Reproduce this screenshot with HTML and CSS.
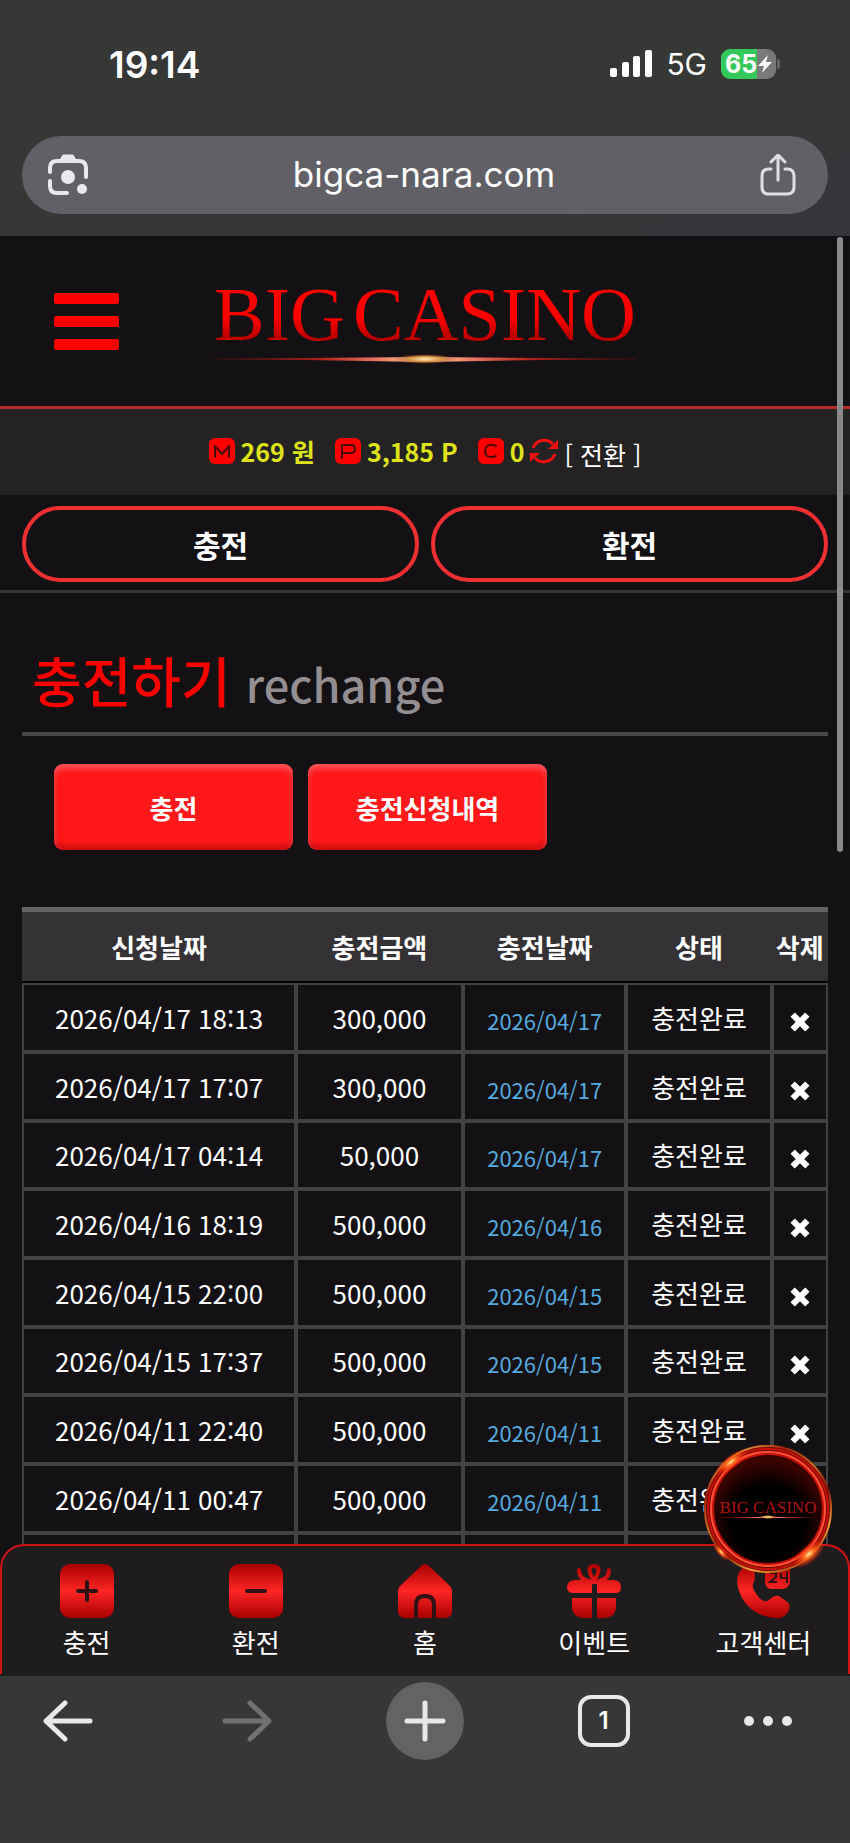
FILE: index.html
```html
<!DOCTYPE html>
<html lang="ko">
	<head>
		<meta charset="utf-8">
		<meta name="viewport" content="width=device-width, initial-scale=1">
		<title>BIG CASINO</title>
		<link rel="stylesheet" href="styles.css">
	</head>
	<body>
		<header class="browser-top">
			<div class="status">
				<span class="clock">19:14</span>
				<div class="status-right">
					<svg class="signal" viewBox="0 0 42 28" fill="#fff">
						<rect x="0" y="18" width="7" height="9" rx="2"/>
						<rect x="12" y="12" width="7" height="15" rx="2"/>
						<rect x="23" y="6" width="7" height="21" rx="2"/>
						<rect x="35" y="0" width="7" height="27" rx="2"/>
					</svg>
					<span class="network">5G</span>
					<div class="battery">
						<span class="battery-level">65</span>
						<svg class="bolt" viewBox="0 0 14 20"><path d="M10 1 0 12h6l-2 7L14 8H8z" fill="#fff"/></svg>
					</div>
				</div>
			</div>
			<div class="address">
				<button class="address-btn" aria-label="렌즈">
					<svg width="40" height="42" viewBox="0 0 40 42" fill="none" stroke="#e8e8ee" stroke-width="4" stroke-linecap="round">
						<path d="M2 18v-4q0-7 7-7h22q7 0 7 7v9M2 27v5q0 7 7 7h10"/>
						<path d="M12 6 15 1h10l3 5z" fill="#e8e8ee" stroke-width="1" stroke-linejoin="round"/>
						<circle cx="20" cy="23" r="7" fill="#e8e8ee" stroke="none"/>
						<circle cx="34" cy="35" r="5" fill="#e8e8ee" stroke="none"/>
					</svg>
				</button>
				<span class="url">bigca-nara.com</span>
				<button class="address-btn" aria-label="공유">
					<svg width="36" height="42" viewBox="0 0 36 42" fill="none" stroke="#e0e0e4" stroke-width="4" stroke-linecap="round" stroke-linejoin="round">
						<path d="M11 15H9q-7 0-7 7v11q0 7 7 7h18q7 0 7-7V22q0-7-7-7h-2" stroke-width="3"/>
						<path d="M18 26V2M11 8l7-7 7 7" stroke-width="3"/>
					</svg>
				</button>
			</div>
		</header>

		<div class="page">
			<div class="site-head">
				<button class="menu" aria-label="메뉴"><span></span><span></span><span></span></button>
				<a class="logo" href="#">
					<span class="logo-text"><span class="logo-word">BIG</span> <span class="logo-word">CASINO</span></span>
					<svg class="logo-flare" viewBox="0 0 420 12" preserveAspectRatio="none">
						<defs>
							<linearGradient id="beam">
								<stop offset="0" stop-color="#5a1010" stop-opacity="0.3"/>
								<stop offset="0.25" stop-color="#b02018"/>
								<stop offset="0.4" stop-color="#f08068"/>
								<stop offset="0.5" stop-color="#ffe9a8"/>
								<stop offset="0.6" stop-color="#f08068"/>
								<stop offset="0.75" stop-color="#b02018"/>
								<stop offset="1" stop-color="#5a1010" stop-opacity="0.3"/>
							</linearGradient>
							<radialGradient id="glow">
								<stop offset="0" stop-color="#fff0b8"/>
								<stop offset="0.5" stop-color="#d89848"/>
								<stop offset="1" stop-color="#a03018" stop-opacity="0"/>
							</radialGradient>
						</defs>
						<path d="M0 5h90l120-1 120 1h90v2h-90l-120 2-120-2H0z" fill="url(#beam)"/>
						<ellipse cx="210" cy="6" rx="32" ry="5" fill="url(#glow)"/>
					</svg>
				</a>
			</div>

			<div class="wallet">
				<svg class="coin" viewBox="0 0 26 26"><rect width="26" height="26" rx="6" fill="#f00"/><path d="M6 19V8l7 8 7-8v11" fill="none" stroke="#4a0a0a" stroke-width="2" stroke-linecap="round" stroke-linejoin="round"/></svg>
				<strong class="amount">269 원</strong>
				<svg class="coin coin-next" viewBox="0 0 26 26"><rect width="26" height="26" rx="6" fill="#f00"/><path d="M7 20V7h9q4 0 4 4t-4 4H8" fill="none" stroke="#4a0a0a" stroke-width="2" stroke-linecap="round" stroke-linejoin="round"/></svg>
				<strong class="amount">3,185 P</strong>
				<svg class="coin coin-next" viewBox="0 0 26 26"><rect width="26" height="26" rx="6" fill="#f00"/><path d="M18 8q-2-1-5-1-6 0-6 6t6 6q3 0 5-1" fill="none" stroke="#4a0a0a" stroke-width="2" stroke-linecap="round"/></svg>
				<strong class="amount">0</strong>
				<svg class="refresh" viewBox="0 0 28 28">
					<path d="M3 11A12 12 0 0 1 23 7M25 17A12 12 0 0 1 5 21" fill="none" stroke="#f01010" stroke-width="3"/>
					<path d="M28 3v9h-10zM0 25v-9h10z" fill="#f01010"/>
				</svg>
				<a class="convert" href="#">[ 전환 ]</a>
			</div>

			<div class="quick">
				<button class="quick-btn">충전</button>
				<button class="quick-btn">환전</button>
			</div>

			<main class="content">
				<h1 class="title">충전하기 <small class="subtitle">rechange</small></h1>
				<div class="tabs">
					<button class="tab">충전</button>
					<button class="tab">충전신청내역</button>
				</div>
				<table class="history">
					<colgroup>
						<col class="col-request"><col class="col-amount"><col class="col-date"><col class="col-state"><col class="col-delete">
					</colgroup>
					<thead>
						<tr><th>신청날짜</th><th>충전금액</th><th>충전날짜</th><th>상태</th><th>삭제</th></tr>
					</thead>
					<tbody>
						<tr><td>2026/04/17 18:13</td><td>300,000</td><td class="date">2026/04/17</td><td>충전완료</td><td><button class="delete" aria-label="삭제"><svg viewBox="0 0 18 18"><path d="m3 3 12 12M15 3 3 15"/></svg></button></td></tr>
						<tr><td>2026/04/17 17:07</td><td>300,000</td><td class="date">2026/04/17</td><td>충전완료</td><td><button class="delete" aria-label="삭제"><svg viewBox="0 0 18 18"><path d="m3 3 12 12M15 3 3 15"/></svg></button></td></tr>
						<tr><td>2026/04/17 04:14</td><td>50,000</td><td class="date">2026/04/17</td><td>충전완료</td><td><button class="delete" aria-label="삭제"><svg viewBox="0 0 18 18"><path d="m3 3 12 12M15 3 3 15"/></svg></button></td></tr>
						<tr><td>2026/04/16 18:19</td><td>500,000</td><td class="date">2026/04/16</td><td>충전완료</td><td><button class="delete" aria-label="삭제"><svg viewBox="0 0 18 18"><path d="m3 3 12 12M15 3 3 15"/></svg></button></td></tr>
						<tr><td>2026/04/15 22:00</td><td>500,000</td><td class="date">2026/04/15</td><td>충전완료</td><td><button class="delete" aria-label="삭제"><svg viewBox="0 0 18 18"><path d="m3 3 12 12M15 3 3 15"/></svg></button></td></tr>
						<tr><td>2026/04/15 17:37</td><td>500,000</td><td class="date">2026/04/15</td><td>충전완료</td><td><button class="delete" aria-label="삭제"><svg viewBox="0 0 18 18"><path d="m3 3 12 12M15 3 3 15"/></svg></button></td></tr>
						<tr><td>2026/04/11 22:40</td><td>500,000</td><td class="date">2026/04/11</td><td>충전완료</td><td><button class="delete" aria-label="삭제"><svg viewBox="0 0 18 18"><path d="m3 3 12 12M15 3 3 15"/></svg></button></td></tr>
						<tr><td>2026/04/11 00:47</td><td>500,000</td><td class="date">2026/04/11</td><td>충전완료</td><td></td></tr>
						<tr><td></td><td></td><td></td><td></td><td></td></tr>
					</tbody>
				</table>
			</main>

			<nav class="bottom-nav">
				<a class="nav-item" href="#">
					<svg class="nav-icon" viewBox="0 0 54 54">
						<defs>
							<linearGradient id="red" gradientUnits="userSpaceOnUse" x1="0" y1="0" x2="0" y2="54">
								<stop offset="0" stop-color="#a80000"/>
								<stop offset="0.5" stop-color="#ff2626"/>
								<stop offset="1" stop-color="#a80000"/>
							</linearGradient>
						</defs>
						<rect width="54" height="54" rx="10" fill="url(#red)"/>
						<path d="M18 27h18M27 18v18" stroke="#301212" stroke-width="4" stroke-linecap="round"/>
					</svg>
					<span>충전</span>
				</a>
				<a class="nav-item" href="#">
					<svg class="nav-icon" viewBox="0 0 54 54">
						<rect width="54" height="54" rx="10" fill="url(#red)"/>
						<path d="M18 27h18" stroke="#301212" stroke-width="4" stroke-linecap="round"/>
					</svg>
					<span>환전</span>
				</a>
				<a class="nav-item" href="#">
					<svg class="nav-icon" viewBox="0 0 54 54">
						<path d="M23 2q4-4 8 0l21 20q2 2 2 5v20q0 7-7 7H7q-7 0-7-7V27q0-3 2-5z" fill="url(#red)"/>
						<path d="M18 54V41q0-9 9-9t9 9v13" fill="none" stroke="#301212" stroke-width="4"/>
					</svg>
					<span>홈</span>
				</a>
				<a class="nav-item" href="#">
					<svg class="nav-icon" viewBox="0 0 54 54" fill="url(#red)">
						<path d="M8 16h38q8 0 8 7t-7 6H30v-9h-5v9H7q-7 0-7-6t8-7zM5 34h20v20H16Q5 53 5 42zM30 34h19v8q0 11-11 12h-8z"/>
						<path d="M27 17q-9-15 0-15t0 15zM22 17q-10-2-10-11M32 17q10-2 10-11" fill="none" stroke="url(#red)" stroke-width="4" stroke-linecap="round"/>
					</svg>
					<span>이벤트</span>
				</a>
				<a class="nav-item" href="#">
					<svg class="nav-icon" viewBox="0 0 54 54">
						<path d="M9 2q5-3 9 2l1 8q0 4-2 8-1 3 2 8 4 7 9 9 3 1 6-2 4-4 9-3l7 5q5 3 3 9-4 9-14 8Q16 52 6 34-5 12 9 2z" fill="url(#red)"/>
						<path d="M29 0h25v16q0 9-9 9h-9q-7 0-7-8z" fill="url(#red)"/>
						<path d="M34 9h6v4l-6 5h7M45 9v5h6M51 8v11" fill="none" stroke="#301212" stroke-width="2"/>
					</svg>
					<span>고객센터</span>
				</a>
			</nav>

			<a class="badge" href="#" aria-label="BIG CASINO">
				<svg viewBox="0 0 130 130">
					<defs>
						<linearGradient id="ring" x1="0.2" y1="0" x2="0.8" y2="1">
							<stop offset="0" stop-color="#ffc050"/>
							<stop offset="0.2" stop-color="#a02008"/>
							<stop offset="0.4" stop-color="#c87020"/>
							<stop offset="0.6" stop-color="#801008"/>
							<stop offset="0.8" stop-color="#f0a030"/>
							<stop offset="1" stop-color="#a03010"/>
						</linearGradient>
						<radialGradient id="disc" cy="0.6">
							<stop offset="0.6" stop-color="#000"/>
							<stop offset="1" stop-color="#3c0400"/>
						</radialGradient>
						<radialGradient id="spark">
							<stop offset="0" stop-color="#fff0a0"/>
							<stop offset="0.3" stop-color="#ff7020"/>
							<stop offset="1" stop-color="#f01000" stop-opacity="0"/>
						</radialGradient>
					</defs>
					<circle cx="65" cy="65" r="61" fill="url(#disc)" stroke="#700a00" stroke-width="6"/>
					<circle cx="65" cy="65" r="63" fill="none" stroke="url(#ring)" stroke-width="2"/>
					<circle cx="65" cy="65" r="60" fill="none" stroke="#c81008" stroke-width="2"/>
					<circle cx="65" cy="65" r="56" fill="none" stroke="#c01008" stroke-width="4"/>
					<circle cx="65" cy="65" r="57" fill="none" stroke="#ff5038" stroke-width="2"/>
					<ellipse cx="28" cy="18" rx="20" ry="7" transform="rotate(-38 28 18)" fill="url(#spark)"/>
					<ellipse cx="106" cy="110" rx="20" ry="9" transform="rotate(-40 106 110)" fill="url(#spark)"/>
					<ellipse cx="18" cy="108" rx="12" ry="4" transform="rotate(48 18 108)" fill="url(#spark)"/>
					<text class="badge-text" x="65" y="69" text-anchor="middle">BIG CASINO</text>
					<path d="M17 73h96v1H17z" fill="url(#beam)"/>
					<ellipse cx="65" cy="73" rx="9" ry="2" fill="url(#glow)"/>
				</svg>
			</a>
			<div class="scrollbar"></div>
		</div>

		<footer class="browser-bottom">
			<button class="tool" aria-label="뒤로">
				<svg width="50" height="42" viewBox="0 0 50 42"><path d="M22 3 3 21l19 18M3 21h44"/></svg>
			</button>
			<button class="tool tool-off" aria-label="앞으로">
				<svg width="50" height="42" viewBox="0 0 50 42"><path d="m28 3 19 18-19 18M47 21H3"/></svg>
			</button>
			<button class="tool tool-new" aria-label="새 탭">
				<svg width="42" height="42" viewBox="0 0 42 42"><path d="M21 3v36M3 21h36"/></svg>
			</button>
			<button class="tool"><span class="tab-count">1</span></button>
			<button class="tool tool-more" aria-label="더보기">
				<svg width="50" height="12" viewBox="0 0 50 12"><g fill="#e8e8ea" stroke="none"><circle cx="6" cy="6" r="5"/><circle cx="25" cy="6" r="5"/><circle cx="44" cy="6" r="5"/></g></svg>
			</button>
		</footer>
	</body>
</html>
```
FILE: styles.css
```css
* {
	box-sizing: border-box;
}

body {
	margin: 0;
	height: 100vh;
	display: flex;
	flex-direction: column;
	background: #131114;
	color: #fff;
	font-family: "Noto Sans CJK KR", sans-serif;
	font-size: 26px;
}

button {
	margin: 0;
	padding: 0;
	border: 0;
	background: none;
	color: inherit;
	font: inherit;
	cursor: pointer;
}

a {
	color: inherit;
	text-decoration: none;
}

svg {
	display: block;
}

/* browser top */
.browser-top {
	padding: 0 22px 22px;
	background: linear-gradient(160deg, #363836 60%, #35363b);
	font-family: Inter, sans-serif;
}

.status {
	display: flex;
	justify-content: space-between;
	align-items: center;
	height: 136px;
	padding: 0 48px 8px 87px;
}

.clock {
	font-size: 37px;
	font-weight: 600;
}

.status-right {
	display: flex;
	align-items: center;
	gap: 14px;
}

.signal {
	width: 42px;
	height: 28px;
}

.network {
	font-size: 30px;
}

.battery {
	position: relative;
	display: flex;
	align-items: center;
	width: 55px;
	height: 30px;
	margin-right: 4px;
	border-radius: 9px;
	background: linear-gradient(90deg, #34c759 66%, #77797a 66%);
}

.battery::after {
	content: "";
	position: absolute;
	right: -4px;
	width: 3px;
	height: 10px;
	border-radius: 0 3px 3px 0;
	background: #66686a;
}

.battery-level {
	padding-left: 4px;
	font-size: 25px;
	font-weight: 700;
	line-height: 30px;
}

.bolt {
	width: 14px;
	height: 20px;
	margin-left: 1px;
}

.address {
	display: flex;
	justify-content: space-between;
	align-items: center;
	height: 78px;
	padding: 0 32px 0 26px;
	border-radius: 39px;
	background: #606066;
}

.url {
	padding-bottom: 2px;
	font-size: 35px;
}

/* site header */
.page {
	position: relative;
	flex: 1;
	min-height: 0;
	overflow: hidden;
}

.site-head {
	display: grid;
	grid-template-columns: 1fr auto 1fr;
	align-items: center;
	height: 173px;
	padding: 0 54px;
	border-bottom: 3px solid #b82a2c;
}

.menu {
	display: grid;
	gap: 12px;
	width: 65px;
}

.menu span {
	height: 11px;
	border-radius: 2px;
	background: #f00;
}

.logo {
	display: block;
}

.logo-text {
	display: flex;
	gap: 8px;
	font-family: "Liberation Serif", serif;
	font-size: 76px;
	line-height: 72px;
}

.logo-word {
	background: linear-gradient(#ff0000 55%, #c00000 80%);
	background-clip: text;
	-webkit-background-clip: text;
	color: transparent;
}

.logo-flare {
	width: 100%;
	height: 12px;
	margin-top: 3px;
}

.wallet {
	display: flex;
	justify-content: center;
	align-items: center;
	height: 86px;
	padding-bottom: 2px;
	background: #242223;
	font-size: 25px;
}

.coin {
	width: 26px;
	height: 26px;
}

.coin-next {
	margin-left: 20px;
}

.amount {
	margin-left: 6px;
	color: #dfe31a;
}

.refresh {
	width: 28px;
	height: 28px;
	margin: 0 6px;
}

.convert {
	padding-top: 6px;
}

.quick {
	display: grid;
	grid-template-columns: 1fr 1fr;
	gap: 12px;
	padding: 11px 22px 8px;
	border-bottom: 3px solid #343234;
}

.quick-btn {
	height: 76px;
	border: 4px solid #ee3033;
	border-radius: 38px;
	font-size: 30px;
	font-weight: 700;
}

/* content */
.content {
	padding: 43px 22px 0;
}

.title {
	margin: 0;
	padding: 0 10px 5px;
	border-bottom: 4px solid #4a474a;
	color: #f00;
	font-size: 54px;
	font-weight: 500;
	line-height: 87px;
}

.subtitle {
	color: #938e92;
	font-size: 45px;
}

.tabs {
	display: flex;
	gap: 15px;
	padding: 28px 32px 57px;
}

.tab {
	width: 239px;
	height: 86px;
	border-radius: 9px;
	background: #ff181a;
	box-shadow: inset 0 4px 6px rgba(255, 120, 130, 0.7), inset 0 -4px 6px rgba(160, 0, 0, 0.6);
	font-weight: 700;
}

.history {
	width: 100%;
	table-layout: fixed;
	border-collapse: separate;
	border-spacing: 0;
	text-align: center;
}

.col-request {
	width: 34%;
}

.col-amount {
	width: 20.7%;
}

.col-date {
	width: 20.3%;
}

.col-state {
	width: 18%;
}

.col-delete {
	width: 7%;
}

th {
	height: 76px;
	padding: 0;
	border-top: 5px solid #646265;
	border-bottom: 2px solid #050405;
	background: #353235;
	font-weight: 700;
	white-space: nowrap;
}

td {
	height: 69px;
	padding: 0;
	border: 2px solid #434144;
	line-height: 40px;
}

tr:nth-child(3n) td {
	height: 68px;
}

.date {
	padding-top: 4px;
	color: #55aade;
	font-size: 22px;
}

.delete {
	display: block;
	margin: 8px auto 0;
}

.delete svg {
	width: 22px;
	height: 22px;
	fill: none;
	stroke: #fff;
	stroke-width: 5;
}

/* fixed parts */
.bottom-nav {
	position: absolute;
	right: 0;
	bottom: 0;
	left: 0;
	display: grid;
	grid-template-columns: repeat(5, 1fr);
	height: 130px;
	padding-top: 18px;
	border: 2px solid #d01215;
	border-bottom: 0;
	border-radius: 24px 24px 0 0;
	background: #1f1c1e;
}

.nav-item {
	display: flex;
	flex-direction: column;
	align-items: center;
	gap: 5px;
	line-height: 38px;
}

.nav-icon {
	width: 54px;
	height: 54px;
}

.badge {
	position: absolute;
	right: 17px;
	bottom: 100px;
	width: 130px;
	height: 130px;
}

.badge-text {
	fill: #b01414;
	font-family: "Liberation Serif", serif;
	font-size: 17px;
}

.scrollbar {
	position: absolute;
	top: 1px;
	right: 7px;
	width: 6px;
	height: 615px;
	border-radius: 3px;
	background: #89888a;
}

/* browser bottom */
.browser-bottom {
	display: flex;
	justify-content: space-between;
	align-items: flex-start;
	height: 169px;
	padding: 6px 29px 0;
	border-top: 2px solid #1c1c1d;
	background: #363738;
}

.tool {
	display: grid;
	place-items: center;
	width: 78px;
	height: 78px;
}

.tool svg {
	fill: none;
	stroke: #e8e8ea;
	stroke-width: 5;
	stroke-linecap: round;
	stroke-linejoin: round;
}

.tool-off svg {
	stroke: #707172;
}

.tool-new {
	border-radius: 50%;
	background: #626365;
}

.tool-more {
	justify-items: start;
}

.tab-count {
	width: 52px;
	height: 52px;
	border: 4px solid #e8e8ea;
	border-radius: 13px;
	font-family: Inter, sans-serif;
	font-size: 24px;
	font-weight: 600;
	line-height: 44px;
}
```
